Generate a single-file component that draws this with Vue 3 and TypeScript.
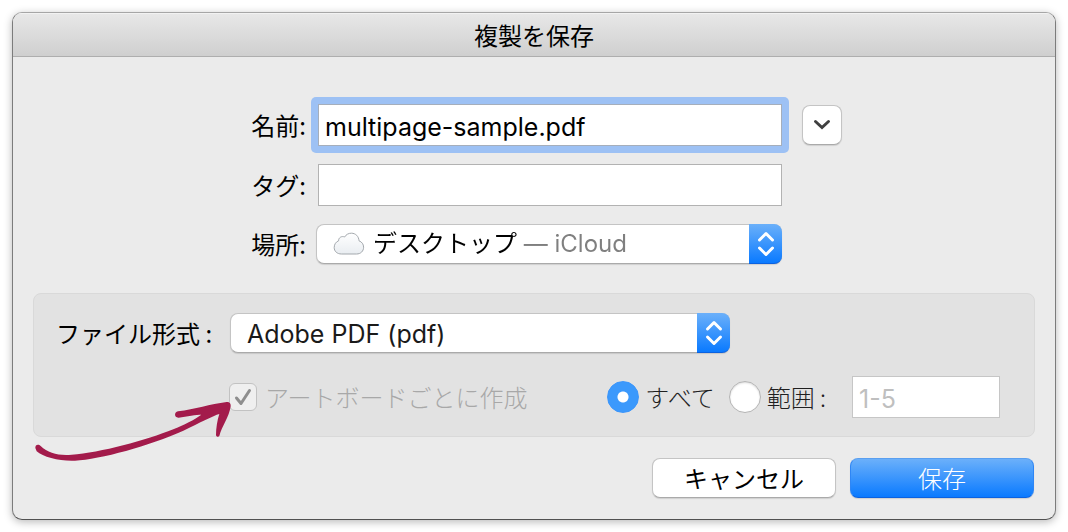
<script setup lang="ts">
import { ref } from 'vue'

const fileName = ref('multipage-sample.pdf')
const tags = ref('')
const place = ref('desktop')
const format = ref('pdf')
const perArtboard = ref(true)
const scope = ref<'all' | 'range'>('all')
const range = ref('')
</script>

<template>
  <main class="stage">
    <form class="dialog" @submit.prevent>
      <h1 class="titlebar">複製を保存</h1>

      <div class="fields">
        <label class="label" for="file-name">名前:</label>
        <div class="focus-ring">
          <input id="file-name" v-model="fileName" class="text-field" type="text" />
        </div>
        <button class="toggle" type="button" aria-label="詳細">
          <svg viewBox="0 0 20 12" width="20" height="12" aria-hidden="true">
            <path d="M3.5 2.5 L10 8.5 L16.5 2.5" />
          </svg>
        </button>

        <label class="label" for="tags">タグ:</label>
        <input id="tags" v-model="tags" class="text-field tags" type="text" />

        <label class="label" for="place">場所:</label>
        <div class="popup">
          <svg class="cloud" viewBox="0 0 32 24" width="32" height="24" aria-hidden="true">
            <defs>
              <linearGradient id="cloud-fill" x1="0" y1="0" x2="0" y2="1">
                <stop offset="0" stop-color="#ffffff" />
                <stop offset="1" stop-color="#e9edf1" />
              </linearGradient>
            </defs>
            <path
              d="M8.5 22 C4 22 1.2 19.2 1.2 15.6 C1.2 12.2 3 9.8 5.6 8.8 C5.4 5.8 8.6 3.6 11.6 5 C13.2 2.4 15.6 1.2 18.4 1.2 C22.6 1.2 25.8 4.4 26 8.8 C28.8 9.8 30.6 12.2 30.6 15.2 C30.6 19.2 27.6 22 23.6 22 Z"
              fill="url(#cloud-fill)"
            />
          </svg>
          <select id="place" v-model="place" class="place-select">
            <option value="desktop">デスクトップ — iCloud</option>
          </select>
          <span class="stepper" aria-hidden="true">
            <svg viewBox="0 0 18 26" width="18" height="26">
              <path d="M2.5 9 L9 2.5 L15.5 9 M2.5 17 L9 23.5 L15.5 17" />
            </svg>
          </span>
        </div>
      </div>

      <div class="options">
        <div class="option-row">
          <label class="format-label" for="format">ファイル形式 :</label>
          <div class="popup format-popup">
            <select id="format" v-model="format" class="format-select">
              <option value="pdf">Adobe PDF (pdf)</option>
            </select>
            <span class="stepper" aria-hidden="true">
              <svg viewBox="0 0 18 26" width="18" height="26">
                <path d="M2.5 9 L9 2.5 L15.5 9 M2.5 17 L9 23.5 L15.5 17" />
              </svg>
            </span>
          </div>
        </div>

        <div class="option-row second">
          <label class="check">
            <span class="check-box">
              <input v-model="perArtboard" type="checkbox" disabled />
              <svg viewBox="0 0 28 28" width="28" height="28" aria-hidden="true">
                <path d="M7.5 15 L12 20.5 L20.5 7.5" />
              </svg>
            </span>
            <span>アートボードごとに作成</span>
          </label>
          <div class="scope">
            <label class="radio">
              <input v-model="scope" type="radio" name="scope" value="all" />
              <span>すべて</span>
            </label>
            <label class="radio">
              <input v-model="scope" type="radio" name="scope" value="range" />
              <span>範囲 :</span>
            </label>
            <input v-model="range" class="text-field range" type="text" placeholder="1-5" aria-label="範囲" />
          </div>
        </div>

        <svg class="arrow" viewBox="99 360 600 186" width="200" height="62" aria-hidden="true">
          <path
            d="M106 504 C105 493 116 491 122 498 C145 520 175 527 215 524 C300 519 440 480 520 448 C550 436 585 418 604 404 C590 404 560 409 536 413 C522 414 522 396 534 394 C585 388 630 372 680 366 C690 366 693 372 692 379 C688 410 665 440 658 468 C656 472 648 471 648 465 C648 445 652 420 658 402 C640 407 600 428 550 452 C450 497 300 538 225 542 C180 544 130 532 110 514 Z"
          />
        </svg>
      </div>

      <div class="actions">
        <button class="button" type="button">キャンセル</button>
        <button class="button primary" type="submit">保存</button>
      </div>
    </form>
  </main>
</template>

<style>
body {
  margin: 0;
  background: #fff;
}
</style>

<style scoped>
* {
  box-sizing: border-box;
}

.stage {
  padding: 12px;
  font-family: 'Noto Sans CJK JP', sans-serif;
  font-size: 24px;
  line-height: 36px;
  color: #000;
}

input,
select,
button {
  margin: 0;
  font: inherit;
  color: inherit;
}

.dialog {
  border: 1px solid;
  border-color: #a6a6a6 #7c7c7c #505050;
  border-radius: 10px;
  background: #ebebeb;
  box-shadow: 0 2px 8px rgba(0, 0, 0, 0.28);
  overflow: hidden;
}

.titlebar {
  margin: 0;
  height: 44px;
  padding-top: 4px;
  border-bottom: 1px solid #aeaeae;
  background: linear-gradient(#e8e8e8, #cfcfcf);
  box-shadow: inset 0 1px #f2f2f2;
  font-size: 24px;
  font-weight: 400;
  text-align: center;
}

.fields {
  display: grid;
  grid-template-columns: 293fr 466fr 263fr;
  gap: 18px 10px;
  padding-top: 47px;
  align-items: center;
}

.label {
  grid-column: 1;
  text-align: right;
}

.text-field {
  height: 42px;
  min-width: 0;
  padding: 4px 6px 0;
  border: 1px solid #b2b2b2;
  border-radius: 0;
  outline: none;
  background: #fff;
  font-family: Inter, 'Noto Sans CJK JP', sans-serif;
  font-size: 25px;
}

.tags {
  grid-column: 2;
  margin-left: 2px;
}

.focus-ring {
  grid-column: 2;
  display: flex;
  margin: -7px -7px -7px -5px;
  padding: 7px;
  border-radius: 5px;
  background: #9dc1f4;
}

.focus-ring .text-field {
  flex: 1;
  border-color: #a5aebb;
}

.toggle {
  display: flex;
  align-items: center;
  justify-content: center;
  width: 40px;
  height: 40px;
  margin-left: 10px;
  padding: 0;
  border: 1px solid #c4c4c4;
  border-bottom-color: #aaa;
  border-radius: 8px;
  background: #fff;
  box-shadow: 0 1px 1px rgba(0, 0, 0, 0.12);
}

.toggle path {
  fill: none;
  stroke: #404040;
  stroke-width: 3;
  stroke-linecap: round;
}

.popup {
  grid-column: 2;
  position: relative;
  display: flex;
  align-items: center;
  height: 40px;
  border: 1px solid #c4c4c4;
  border-bottom-color: #aaa;
  border-radius: 8px;
  background: #fff;
  box-shadow: 0 1px 1px rgba(0, 0, 0, 0.12);
}

.popup select {
  flex: 1;
  min-width: 0;
  height: 38px;
  padding: 0 0 0 16px;
  border: 0;
  outline: none;
  appearance: none;
  background: transparent;
  font-family: Inter, 'Noto Sans CJK JP', sans-serif;
}

.popup .place-select {
  padding-left: 8px;
  background: linear-gradient(90deg, #000 152px, #7f7f7f 152px);
  background-clip: text;
  -webkit-background-clip: text;
  color: transparent;
}

.popup .format-select {
  padding-top: 2px;
  font-size: 25px;
  color: #1a1a1a;
}

.cloud {
  margin-left: 16px;
}

.cloud path {
  stroke: #a3a8ad;
  stroke-width: 1;
}

.stepper {
  display: flex;
  align-items: center;
  justify-content: center;
  align-self: stretch;
  width: 33px;
  margin: -1px;
  border-bottom: 1px solid #0b62e0;
  border-radius: 0 8px 8px 0;
  background: linear-gradient(#6bb0fa, #0a7aff);
  pointer-events: none;
}

.stepper path {
  fill: none;
  stroke: #fff;
  stroke-width: 3;
  stroke-linecap: round;
  stroke-linejoin: round;
}

.options {
  position: relative;
  margin: 29px 20px 0;
  padding: 19px 34px 18px 22px;
  border: 1px solid #d9d9d9;
  border-radius: 8px;
  background: #e2e2e2;
}

.option-row {
  display: flex;
  align-items: center;
}

.format-label {
  flex: none;
  width: 174px;
}

.format-popup {
  flex: 0 1 500px;
}

.second {
  justify-content: space-between;
  margin-top: 23px;
  padding-left: 173px;
}

.check,
.radio {
  display: flex;
  align-items: center;
  gap: 8px;
  white-space: nowrap;
}

.check {
  color: #a8a8a8;
  font-weight: 300;
}

.check-box {
  position: relative;
  display: flex;
}

.check-box input {
  width: 28px;
  height: 28px;
  border: 1px solid #c2c2c2;
  border-radius: 6px;
  appearance: none;
  background: #efefef;
}

.check-box svg {
  position: absolute;
  inset: 0;
}

.check-box path {
  fill: none;
  stroke: #8e8e8e;
  stroke-width: 3;
  stroke-linecap: round;
  stroke-linejoin: round;
}

.scope {
  display: flex;
  align-items: center;
  gap: 14px;
}

.radio {
  gap: 6px;
  color: #1f1f1f;
  font-weight: 300;
}

.radio input {
  flex: none;
  width: 32px;
  height: 32px;
  border: 1px solid #b4b4b4;
  border-radius: 50%;
  appearance: none;
  background: #fff;
  box-shadow: inset 0 1px 2px rgba(0, 0, 0, 0.15);
}

.radio input:checked {
  border-color: #3b95fb;
  background: radial-gradient(circle, #fff 5px, #3b99fc 6px);
  box-shadow: none;
}

.range {
  width: 148px;
  margin-left: 12px;
  border-color: #c6c6c6;
}

.range::placeholder {
  color: #bfbfbf;
  opacity: 1;
}

.arrow {
  position: absolute;
  left: -1px;
  top: 106px;
  pointer-events: none;
}

.arrow path {
  fill: #a31b4b;
}

.actions {
  display: flex;
  justify-content: flex-end;
  gap: 14px;
  padding: 21px;
}

.button {
  width: 184px;
  height: 40px;
  padding: 0;
  border: 1px solid #c4c4c4;
  border-bottom-color: #aaa;
  border-radius: 8px;
  background: #fff;
  box-shadow: 0 1px 1px rgba(0, 0, 0, 0.12);
  line-height: 36px;
}

.primary {
  border-color: #5a9ff0 #2f86f5 #0b62e0;
  background: linear-gradient(#6bb0fa, #0a7aff);
  color: #fff;
  font-weight: 300;
}
</style>
